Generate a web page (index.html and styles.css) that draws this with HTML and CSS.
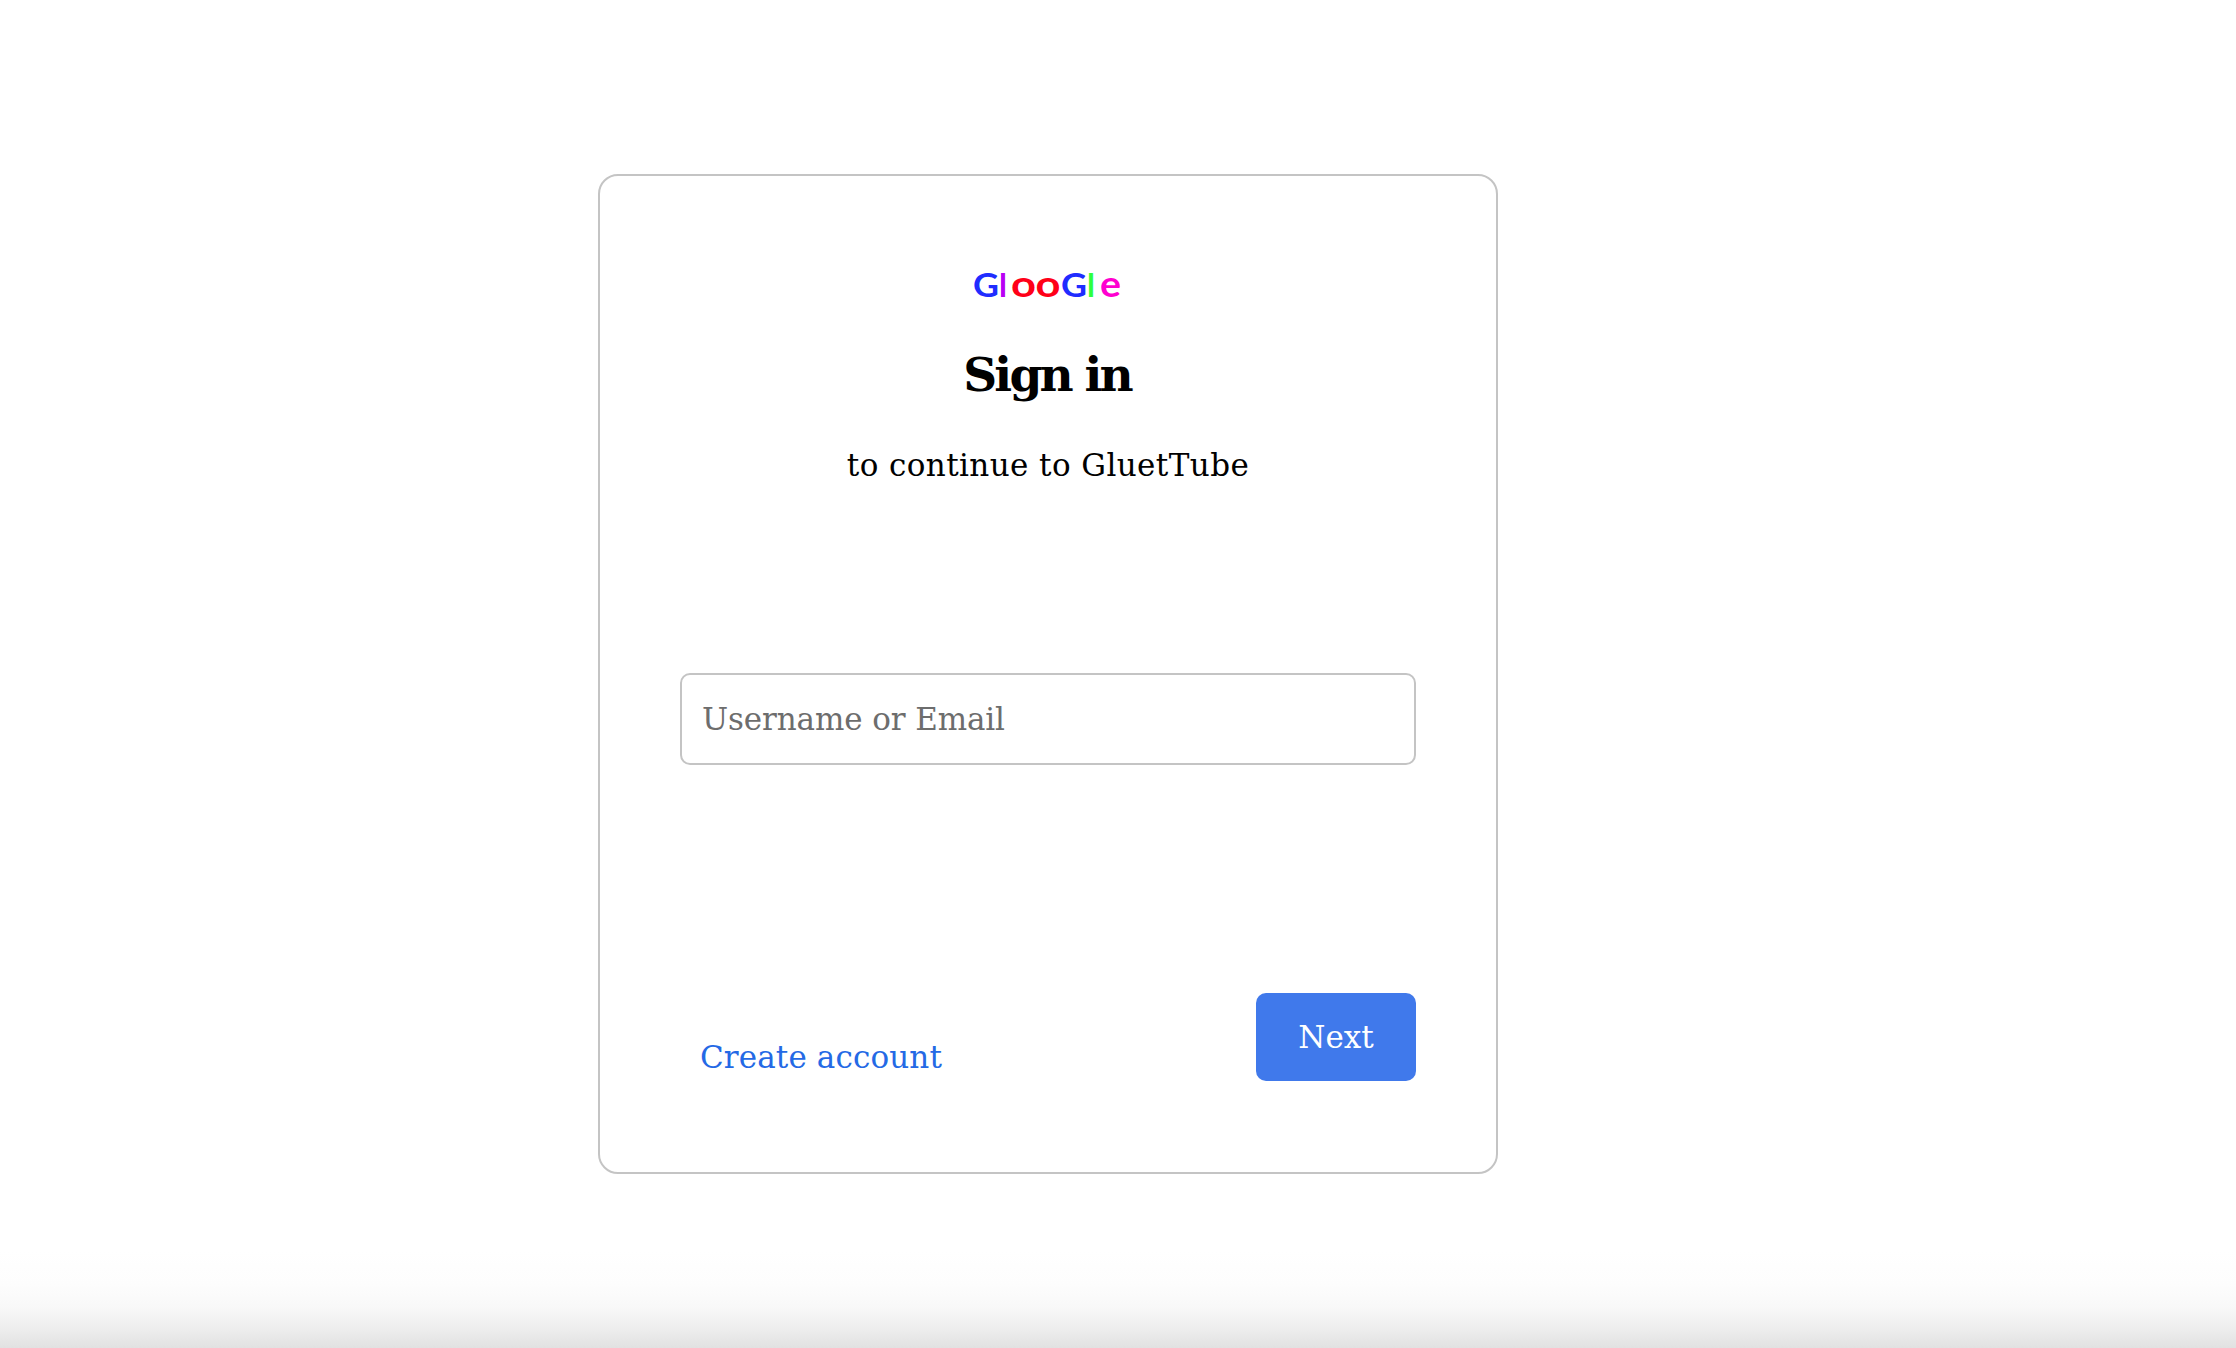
FILE: index.html
```html
<!DOCTYPE html>
<html lang="en">
<head>
<meta charset="utf-8">
<title>Sign in</title>
<link rel="stylesheet" href="styles.css">
</head>
<body>
<main class="card">
  <svg class="logo" width="150" height="40" viewBox="0 0 150 40" role="img" aria-label="GlooGle">
    <text y="31"><tspan class="blue" x="0" textLength="26" lengthAdjust="spacingAndGlyphs">G</tspan><tspan class="purple" x="26">l</tspan><tspan class="red small" x="38" textLength="25" lengthAdjust="spacingAndGlyphs">o</tspan><tspan class="red small" x="62.5" textLength="25" lengthAdjust="spacingAndGlyphs">o</tspan><tspan class="blue" x="88" textLength="26" lengthAdjust="spacingAndGlyphs">G</tspan><tspan class="green" x="114">l</tspan><tspan class="pink small" x="127" textLength="21" lengthAdjust="spacingAndGlyphs">e</tspan></text>
  </svg>
  <h1 class="title">Sign in</h1>
  <p class="subtitle">to continue to GluetTube</p>
  <input class="field" type="text" placeholder="Username or Email" aria-label="Username or Email">
  <div class="actions">
    <a class="create">Create account</a>
    <button class="next" type="button">Next</button>
  </div>
</main>
</body>
</html>
```
FILE: styles.css
```css
* { box-sizing: border-box; }
html { height: 100%; background: #fff; }
body {
  margin: 0;
  height: 1348px;
  padding: 174px 0 0 598px;
  overflow: hidden;
  font: 31px/44px "DejaVu Serif", serif;
  color: #000;
  background: linear-gradient(#fff 1250px, #fdfdfd 1284px, #f8f8f8 1308px, #eee 1328px, #e1e1e1 1348px);
}
.card {
  display: flex;
  flex-direction: column;
  align-items: center;
  width: 900px;
  height: 1000px;
  padding: 90px 80px;
  border: 2px solid #c4c4c4;
  border-radius: 20px;
  background: #fff;
}
.logo {
  flex: none;
  overflow: visible;
  font: 700 32px Lato, sans-serif;
}
.small { font-size: 36px; }
.blue { fill: #202cff; }
.purple { fill: #b800f5; }
.red { fill: #ff0018; }
.green { fill: #2eff3c; }
.pink { fill: #ff00d0; }
.title {
  margin: 39px 0 0;
  font-size: 47px;
  line-height: 60px;
  letter-spacing: -2.8px;
  text-indent: -2px;
}
.subtitle { margin: 38px 0 0; letter-spacing: 0.4px; }
.field {
  width: 736px;
  height: 92px;
  margin-top: 186px;
  padding: 0 20px;
  border: 2px solid #c4c4c4;
  border-radius: 10px;
  background: #fff;
  font: inherit;
  letter-spacing: -0.12px;
}
.field::placeholder { color: #6d6d6d; opacity: 1; }
.actions {
  display: flex;
  justify-content: space-between;
  align-items: flex-end;
  width: 736px;
  height: 88px;
  margin-top: 228px;
  padding-left: 20px;
}
.create { margin-bottom: 2px; color: #2469e5; letter-spacing: 0.12px; }
.next {
  width: 160px;
  height: 88px;
  padding: 0;
  border: 0;
  border-radius: 10px;
  background: #4079eb;
  color: #fff;
  font: inherit;
}
```
